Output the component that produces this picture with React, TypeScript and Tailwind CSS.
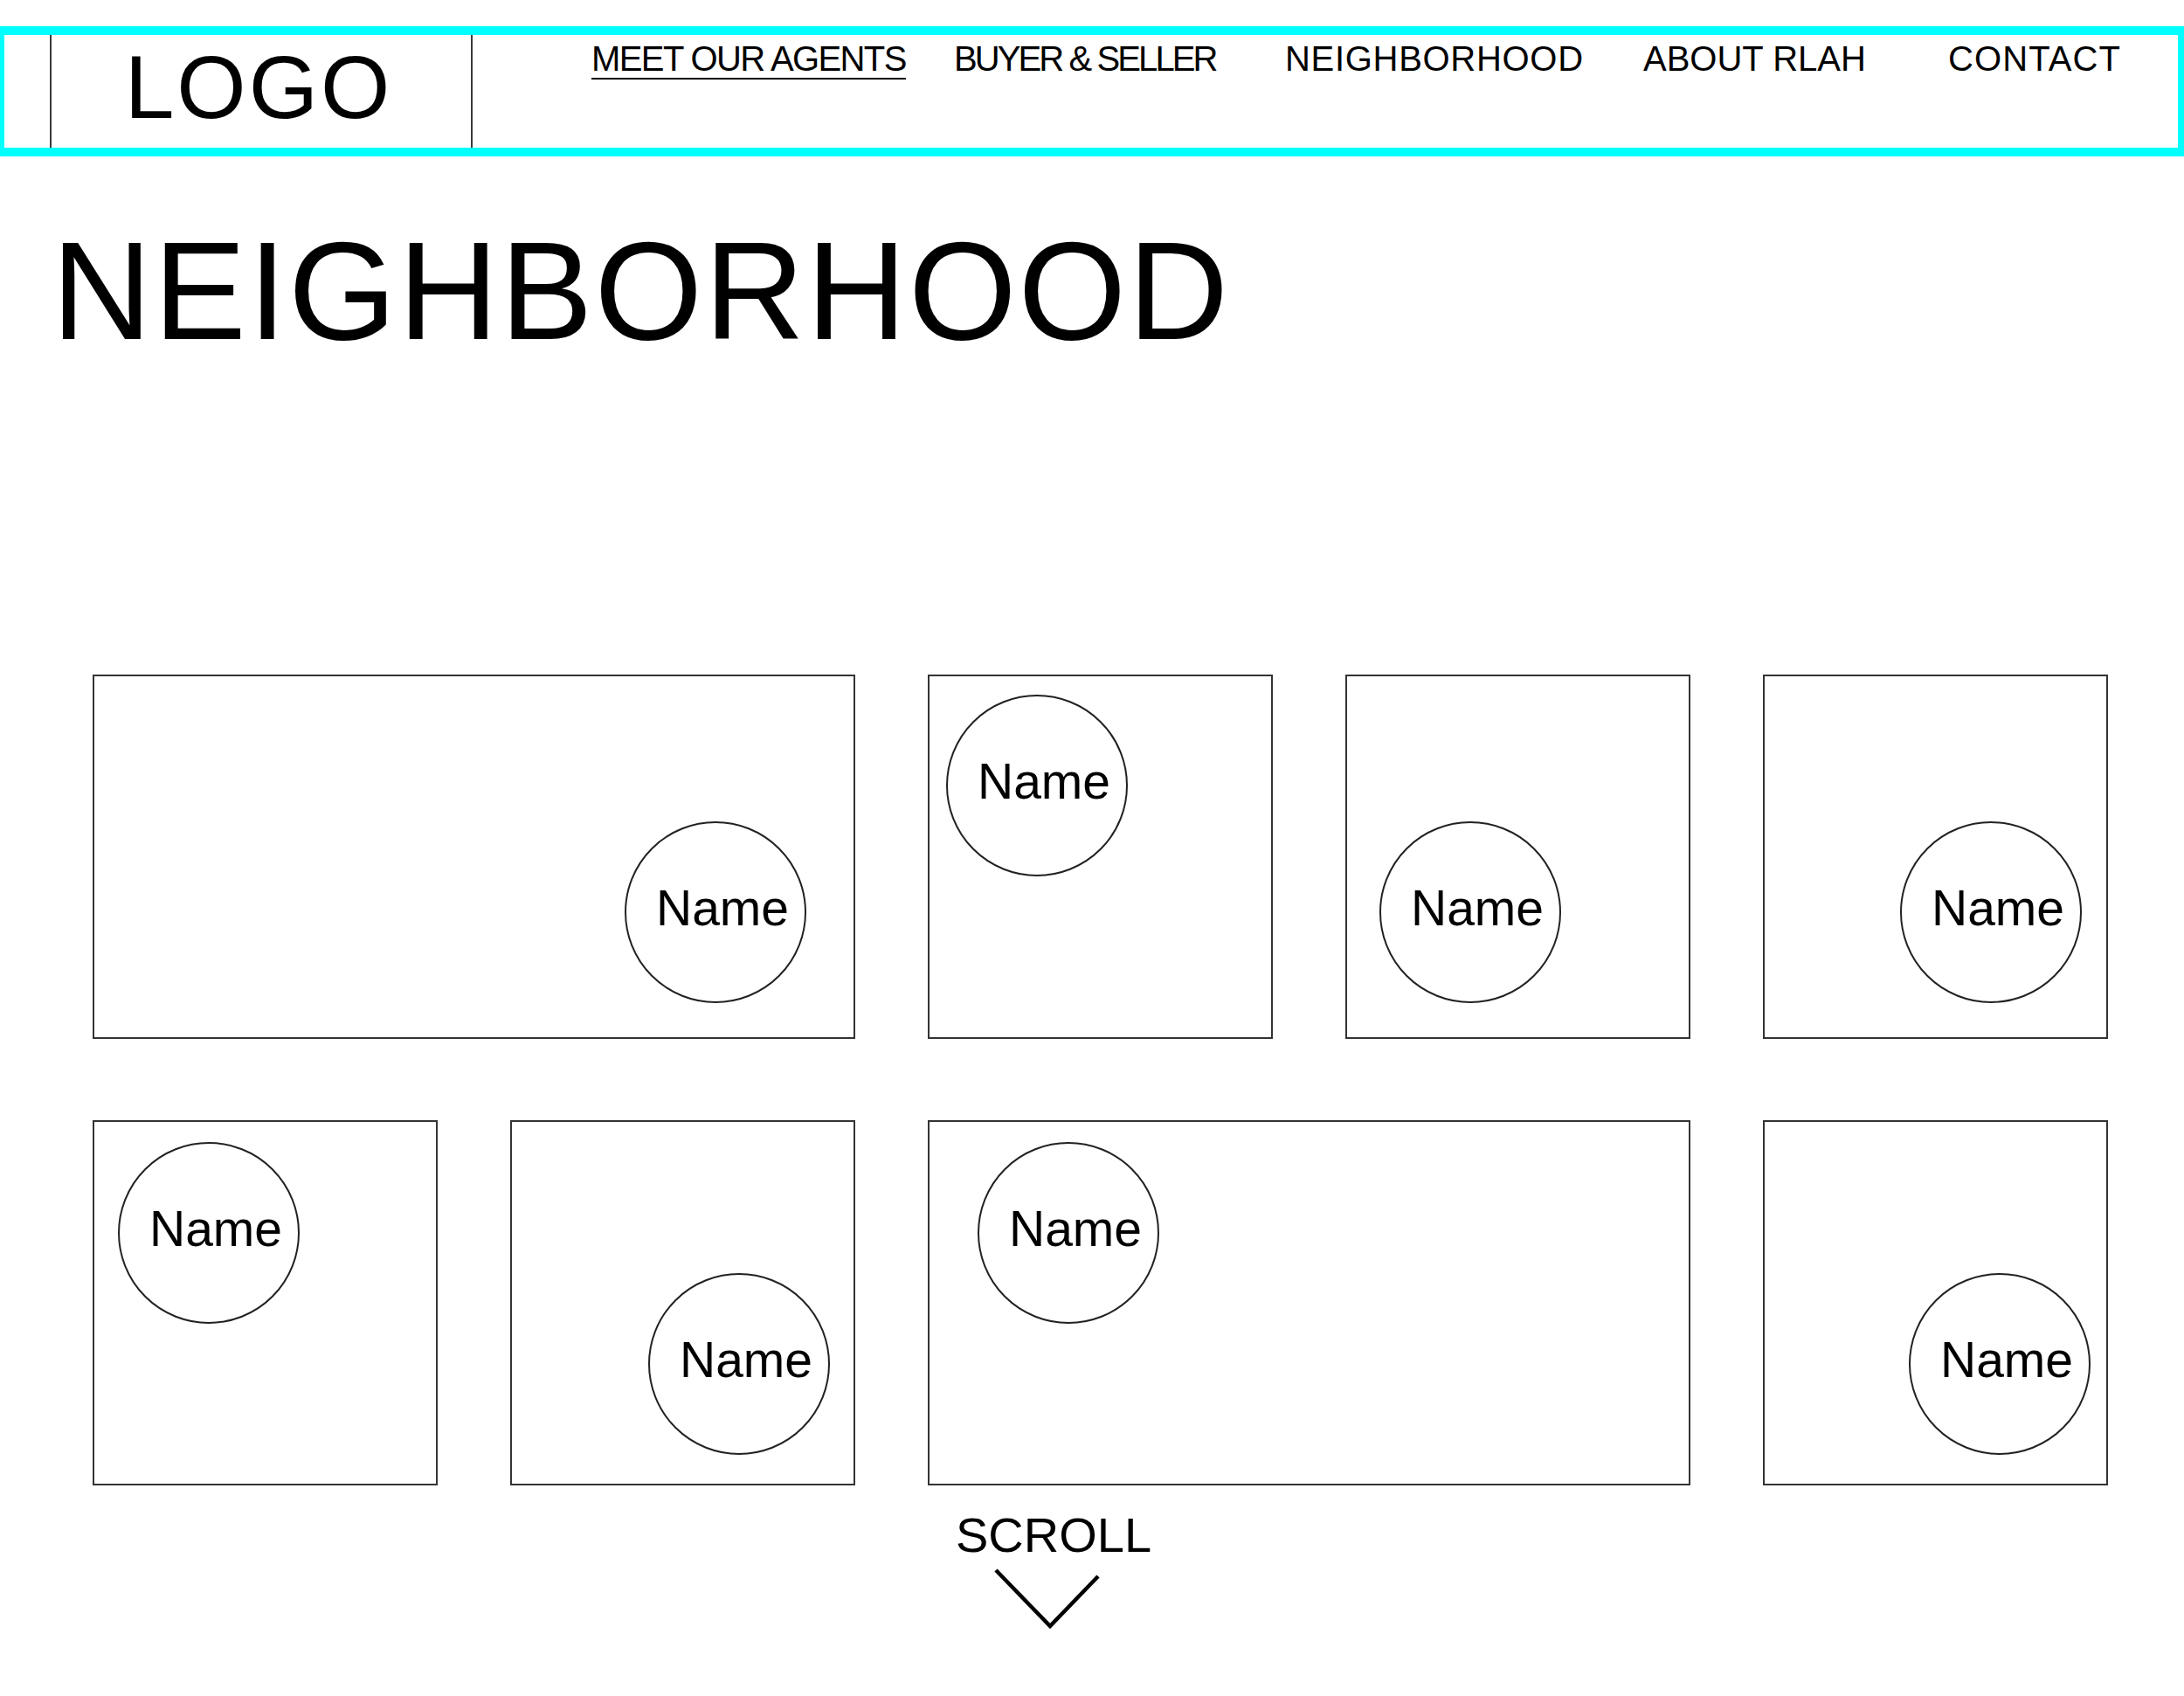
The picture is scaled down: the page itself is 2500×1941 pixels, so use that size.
const navItems = [
  { label: "MEET OUR AGENTS", box: "w-[415px]", text: "tracking-[-1.6px] border-b-2 border-black pb-[2px]" },
  { label: "BUYER & SELLER", box: "w-[379px]", text: "tracking-[-2.9px]" },
  { label: "NEIGHBORHOOD", box: "w-[410px]", text: "tracking-[0.7px]" },
  { label: "ABOUT RLAH", box: "w-[349px]", text: "" },
  { label: "CONTACT", box: "", text: "tracking-[1.1px]" },
];

const cards = [
  { span: "col-span-2", pad: "pl-[607px] pt-[166px]" },
  { span: "", pad: "pl-[19px] pt-[21px]" },
  { span: "", pad: "pl-[37px] pt-[166px]" },
  { span: "", pad: "pl-[155px] pt-[166px]" },
  { span: "", pad: "pl-[27px] pt-[23px]" },
  { span: "", pad: "pl-[156px] pt-[173px]" },
  { span: "col-span-2", pad: "pl-[55px] pt-[23px]" },
  { span: "", pad: "pl-[165px] pt-[173px]" },
];

function NameBubble() {
  return (
    <div className="w-[208px] h-[208px] rounded-full border-2 border-[#222] flex items-center justify-center pl-4 pb-[10px] text-[57px] leading-none text-black">
      Name
    </div>
  );
}

export default function App() {
  return (
    <div className="w-[2500px] h-[1941px] bg-white pt-[30px] text-black font-['Liberation_Sans',Arial,sans-serif]">
      <header className="h-[149px] flex border-[#00ffff] border-t-[10px] border-b-[10px] border-l-[5px] border-r-[7px]">
        <div className="ml-[52px] w-[484px] h-full border-x-2 border-[#3a3a3a] flex justify-center pt-[9px]">
          <span className="text-[102px] leading-none h-[102px] tracking-[3px] -ml-[6px]">LOGO</span>
        </div>
        <nav className="ml-[136px] flex pt-[7px]">
          {navItems.map(item => (
            <div key={item.label} className={item.box}>
              <span className={`inline-block text-[40px] leading-none ${item.text}`}>{item.label}</span>
            </div>
          ))}
        </nav>
      </header>

      <h1 className="ml-[59px] mt-[75px] h-[159px] text-[159px] leading-none font-normal tracking-[2px]">NEIGHBORHOOD</h1>

      <div className="ml-[106px] mt-[359px] grid grid-cols-[repeat(5,395px)] grid-rows-[417px_418px] gap-x-[83px] gap-y-[93px]">
        {cards.map((c, i) => (
          <div key={i} className={`border-2 border-[#333] flex items-start ${c.span} ${c.pad}`}>
            <NameBubble />
          </div>
        ))}
      </div>

      <div className="ml-[1094px] mt-[29px] text-[56px] leading-none h-[56px]">SCROLL</div>
      <svg className="ml-[1136px] mt-[4px]" width="126" height="76" viewBox="0 0 126 76">
        <polyline points="4,8 66,72 121,15" fill="none" stroke="#000" strokeWidth="4.5" />
      </svg>
    </div>
  );
}
